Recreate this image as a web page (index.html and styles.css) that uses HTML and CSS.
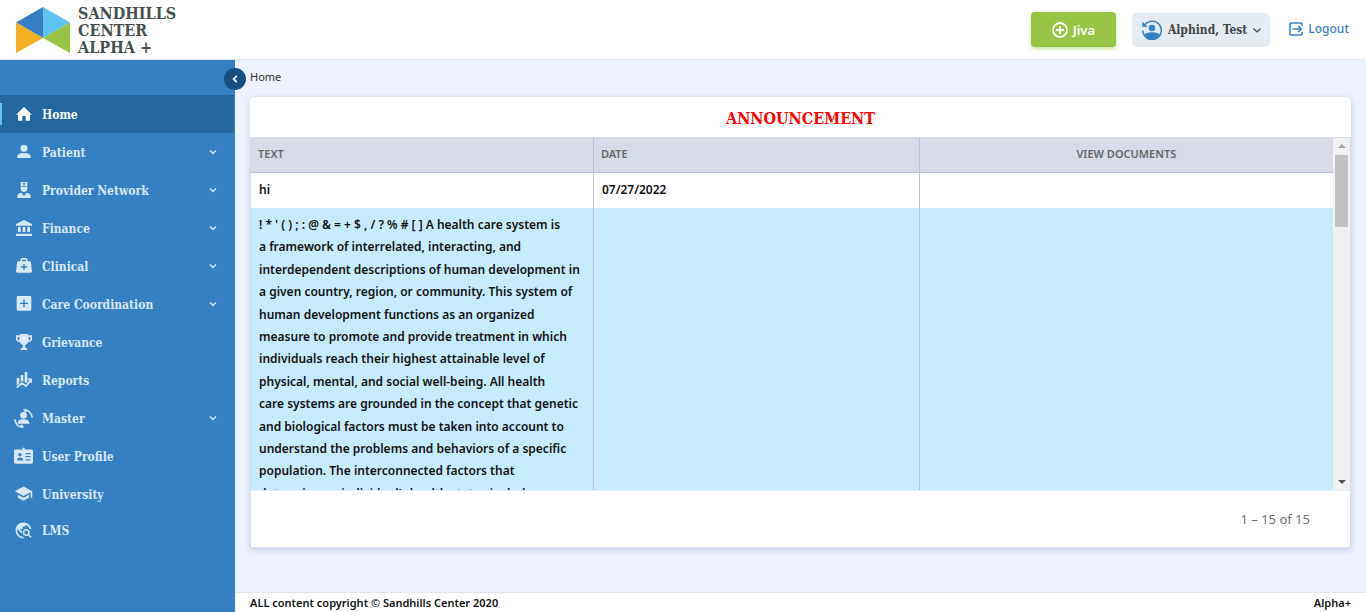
FILE: index.html
```html
<!DOCTYPE html>
<html lang="en">
<head>
<meta charset="utf-8">
<title>Sandhills Center Alpha+</title>
<link rel="stylesheet" href="styles.css">
</head>
<body>
<header class="topbar">
  <a class="brand" href="#">
    <svg class="brand-mark" viewBox="0 0 54 46" aria-hidden="true">
      <path fill="#3580c3" d="M0 15.500 27 0v31z"/><path fill="#60c3f1" d="M54 15.500 27 0v31z"/>
      <path fill="#f1af21" d="M0 15.500 27 31 0 46z"/><path fill="#98c446" d="M54 15.500 27 31 54 46z"/>
    </svg>
    <span class="brand-name">SANDHILLS<br>CENTER<br>ALPHA +</span>
  </a>
  <div class="actions">
    <button class="jiva" type="button">
      <svg class="icon-16" viewBox="0 0 16 16" fill="none" stroke="currentColor" stroke-width="1.800" aria-hidden="true"><circle cx="8" cy="8" r="7"/><path d="M8 4v8M4 8h8"/></svg>
      Jiva
    </button>
    <button class="account" type="button">
      <svg class="icon-20" viewBox="0 0 20 20" aria-hidden="true">
        <path fill="none" stroke="#3580c3" stroke-width="1.500" d="M3 4.500A9.200 9.200 0 1 1 .9 10.500"/>
        <path fill="#3580c3" d="M.3 1.500v5.300h5.300L3.800 5z"/>
        <circle cx="10" cy="8" r="3.200" fill="#3580c3"/>
        <path fill="#3580c3" d="M2 14.500c2-1.500 5-2.300 8-2.300s6 .8 8 2.300c-1.500 3.500-4.500 5.200-8 5.200s-6.500-1.700-8-5.200z"/>
      </svg>
      <span>Alphind, Test</span>
      <svg class="icon-8" viewBox="0 0 8 8" fill="none" stroke="currentColor" stroke-width="1.200" aria-hidden="true"><path d="m.5 2.500 3.500 3.500 3.500-3.500"/></svg>
    </button>
    <a class="logout" href="#">
      <svg class="icon-14" viewBox="0 0 14 14" fill="none" stroke="currentColor" stroke-width="1.500" aria-hidden="true"><path d="M13 4V2q0-1-1-1H2Q1 1 1 2v10q0 1 1 1h10q1 0 1-1v-2M3.500 7H12M9.300 4l3 3-3 3"/></svg>
      Logout
    </a>
  </div>
</header>

<div class="shell">
  <aside class="sidebar">
    <button class="collapse" type="button" aria-label="Collapse menu">
      <svg class="icon-8" viewBox="0 0 8 8" fill="none" stroke="currentColor" stroke-width="1.800" aria-hidden="true"><path d="M5.800.8 2.600 4l3.200 3.200"/></svg>
    </button>
    <nav class="menu">
      <a class="item active" href="#"><svg class="glyph" viewBox="0 0 24 24"><path d="M9.500 22v-7h5v7h6.500v-9h3L12 1.500 0 13h3v9z"/></svg><span>Home</span></a>
      <a class="item" href="#"><svg class="glyph" viewBox="0 0 24 24"><path d="M12 1a5.300 5.300 0 1 1 0 10.600A5.300 5.300 0 0 1 12 1zM12 13.500c6 0 10 2 10 5V21H2v-2.500c0-3 4-5 10-5z"/></svg><span>Patient</span><svg class="chev" viewBox="0 0 8 8"><path d="m1 2.500 3 3 3-3"/></svg></a>
      <a class="item" href="#"><svg class="glyph" viewBox="0 0 24 24"><path fill-rule="evenodd" d="M7 0h10v9c0 4-2 6-5 6s-5-2-5-6zM8.500 5.500V7h7V5.500zM11.300 1v1h-1v1.500h1v1h1.500v-1h1V2h-1V1zM8 16l4 5 4-5c4 1 6 2 6 4.500V24H2v-3.500c0-2.500 2-3.500 6-4.500z"/></svg><span>Provider Network</span><svg class="chev" viewBox="0 0 8 8"><path d="m1 2.500 3 3 3-3"/></svg></a>
      <a class="item" href="#"><svg class="glyph" viewBox="0 0 24 24"><path d="M12 0 0 6v2.500h24V6zM3 10.500h4V18H3zM10 10.500h4V18h-4zM17 10.500h4V18h-4zM0 20.500h24V24H0z"/></svg><span>Finance</span><svg class="chev" viewBox="0 0 8 8"><path d="m1 2.500 3 3 3-3"/></svg></a>
      <a class="item" href="#"><svg class="glyph" viewBox="0 0 24 24"><path fill-rule="evenodd" d="M10 0h4q3 0 3.500 3.500V5H20q2 0 2.500 2L24 20q0 2-2 2H2q-2 0-2-2L1.500 7Q2 5 4 5h2.500V3.500Q7 0 10 0zM9 5h6V3.500L14 2.500h-4L9 3.500zM11 9v3.500H7.500v2H11V18h2v-3.500h3.500v-2H13V9z"/></svg><span>Clinical</span><svg class="chev" viewBox="0 0 8 8"><path d="m1 2.500 3 3 3-3"/></svg></a>
      <a class="item" href="#"><svg class="glyph" viewBox="0 0 24 24"><path fill-rule="evenodd" d="M3 0h18q2 0 2 2v18q0 2-2 2H3q-2 0-2-2V2q0-2 2-2zM11 5v5H6v2h5v5h2v-5h5v-2h-5V5z"/></svg><span>Care Coordination</span><svg class="chev" viewBox="0 0 8 8"><path d="m1 2.500 3 3 3-3"/></svg></a>
      <a class="item" href="#"><svg class="glyph" viewBox="0 0 24 24"><path fill-rule="evenodd" d="M6 0h12v2h6v6c0 3-2 4-5.500 4-1 3-3 4-5 4.500V20c2 0 3.500 1.500 3.500 4H7c0-2.500 1.500-4 3.500-4v-3.500c-2-.5-4-1.500-5-4.500C2 12 0 11 0 8V2h6zM2.500 4.500v5H5v-5zM19 4.500v5h2.500v-5z"/></svg><span>Grievance</span></a>
      <a class="item" href="#"><svg class="glyph" viewBox="0 0 24 24"><path d="M1 9h4v8l-4 3.500zM7 4.500h4v10L9 13l-2 2zM13 0h4v16l-1 1-3-2.500z"/><path fill="none" stroke="currentColor" stroke-width="2.500" d="m1 23.500 8-7 6 4.500 8-9.500M18 11h5v5"/></svg><span>Reports</span></a>
      <a class="item" href="#"><svg class="glyph wide" viewBox="0 0 24 24"><circle cx="12" cy="8" r="4.200"/><path d="M4.500 18.500C5 14 8 13 12 13s7 1 7.500 5.500z"/><path fill="none" stroke="currentColor" stroke-width="2" d="M12 1c6 0 10 4 11 10M12.500 1.500 15.500 4M1 13c1 6 5 10 11 10M8.500 20l3 2.500"/></svg><span>Master</span><svg class="chev" viewBox="0 0 8 8"><path d="m1 2.500 3 3 3-3"/></svg></a>
      <a class="item" href="#"><svg class="glyph wide" viewBox="0 0 24 24"><path fill-rule="evenodd" d="M10.500 1h3v2H22q2 0 2 2v14q0 2-2 2H2q-2 0-2-2V5q0-2 2-2h8.500zM7.500 7.500a2.300 2.300 0 1 0 0 4.600 2.300 2.300 0 0 0 0-4.600zM4 17h7.500v-1.500c-1-2.500-6.500-2.500-7.500 0zM14.500 7.500v1.500H21V7.500zM14.500 11.500V13H21v-1.500zM14.500 15.500V17H21v-1.500z"/></svg><span>User Profile</span></a>
      <a class="item" href="#"><svg class="glyph wide" viewBox="0 0 24 24"><path d="M12 2 1 8l11 6 9-4.910V16h2V8M5 12.180v4L12 20l7-3.820v-4L12 16l-7-3.820z"/></svg><span>University</span></a>
      <a class="item last" href="#"><svg class="glyph wide" viewBox="0 0 24 24"><path d="M19.300 16.900c.4-.7.700-1.500.700-2.400 0-2.500-2-4.500-4.500-4.500S11 12 11 14.500s2 4.500 4.500 4.500c.9 0 1.700-.3 2.400-.7l3.200 3.200 1.400-1.400zM15.500 17c-1.400 0-2.500-1.100-2.500-2.500s1.100-2.500 2.500-2.500 2.500 1.100 2.500 2.500-1.100 2.500-2.500 2.500zM12 20v2C6.480 22 2 17.520 2 12S6.480 2 12 2c4.840 0 8.870 3.440 9.800 8h-2.070c-.64-2.460-2.400-4.470-4.730-5.410V5c0 1.100-.9 2-2 2h-2v2c0 .55-.45 1-1 1H8v2h2v3H9l-4.790-4.790C4.080 10.790 4 11.380 4 12c0 4.410 3.590 8 8 8z"/></svg><span>LMS</span></a>
    </nav>
  </aside>

  <div class="page">
    <main class="content">
      <div class="crumb">Home</div>
      <section class="card">
        <h1 class="title">ANNOUNCEMENT</h1>
        <div class="grid">
          <div class="scroller">
            <table class="list">
              <thead><tr><th class="col-text">TEXT</th><th class="col-date">DATE</th><th class="col-docs">VIEW DOCUMENTS</th></tr></thead>
              <tbody>
                <tr><td>hi</td><td>07/27/2022</td><td></td></tr>
                <tr class="alt"><td>! * ' ( ) ; : @ &amp; = + $ , / ? % # [ ] A health care system is<br>a framework of interrelated, interacting, and<br>interdependent descriptions of human development in<br>a given country, region, or community. This system of<br>human development functions as an organized<br>measure to promote and provide treatment in which<br>individuals reach their highest attainable level of<br>physical, mental, and social well-being. All health<br>care systems are grounded in the concept that genetic<br>and biological factors must be taken into account to<br>understand the problems and behaviors of a specific<br>population. The interconnected factors that<br>determine an individual’s health status include</td><td></td><td></td></tr>
              </tbody>
            </table>
          </div>
          <div class="track" aria-hidden="true"><span class="arrow up"></span><span class="thumb"></span><span class="arrow down"></span></div>
        </div>
        <div class="pager">1 – 15 of 15</div>
      </section>
    </main>
    <footer class="foot"><span>ALL content copyright © Sandhills Center 2020</span><span>Alpha+</span></footer>
  </div>
</div>
</body>
</html>
```
FILE: styles.css
```css
* { box-sizing: border-box; }
body {
  margin: 0;
  height: 100vh;
  display: flex;
  flex-direction: column;
  overflow: hidden;
  background: #eef2fc;
  color: #111;
  font-family: "Noto Sans", "Open Sans", sans-serif;
  font-size: 12px;
}
a { color: inherit; text-decoration: none; }
button { border: 0; font: inherit; cursor: pointer; }
svg { flex: none; }
.icon-8 { width: 8px; height: 8px; }
.icon-14 { width: 14px; height: 14px; }
.icon-16 { width: 16px; height: 16px; }
.icon-20 { width: 20px; height: 20px; }

.topbar {
  flex: none;
  height: 60px;
  display: flex;
  justify-content: space-between;
  padding: 0 17px 0 16px;
  background: #fff;
  border-bottom: 1px solid #e1e5ee;
}
.brand { display: flex; gap: 8px; padding-top: 5px; }
.brand-mark { width: 54px; height: 46px; margin-top: 2px; }
.brand-name {
  color: #46504f;
  font: bold 16px/17px "DejaVu Serif Condensed", "DejaVu Serif", serif;
}
.actions { display: flex; align-items: center; }
.jiva {
  display: flex;
  align-items: center;
  justify-content: center;
  gap: 5px;
  width: 85px;
  height: 35px;
  margin-right: 16px;
  border-radius: 4px;
  background: #98c446;
  color: #fff;
  font-size: 13px;
  font-weight: 600;
  box-shadow: 0 2px 4px #98c44688;
}
.account {
  display: flex;
  align-items: center;
  gap: 6px;
  height: 34px;
  margin-right: 19px;
  padding: 0 9px 0 10px;
  border-radius: 5px;
  background: #e4ebf1;
  color: #444;
  font: bold 12px/16px "DejaVu Serif Condensed", "DejaVu Serif", serif;
}
.logout {
  display: flex;
  align-items: center;
  gap: 5px;
  padding-bottom: 2px;
  color: #3580c3;
  font-size: 12px;
  font-weight: 500;
}

.shell { flex: 1; min-height: 0; display: flex; }
.sidebar {
  position: relative;
  flex: none;
  width: 235px;
  padding: 35px 1px 0 0;
  background: #3580c3;
}
.collapse {
  position: absolute;
  top: 8px;
  right: -11px;
  display: flex;
  align-items: center;
  justify-content: center;
  width: 22px;
  height: 22px;
  padding: 0;
  border-radius: 50%;
  background: #194f80;
  color: #fff;
}
.menu { display: flex; flex-direction: column; }
.item {
  position: relative;
  display: grid;
  grid-template-columns: 19px 1fr 8px;
  align-items: center;
  column-gap: 9px;
  height: 38px;
  padding: 0 17px 0 14px;
  color: #d9e8f5;
  font: bold 12px/16px "DejaVu Serif Condensed", "DejaVu Serif", serif;
}
.item span { padding-top: 2px; }
.item.last { height: 34px; }
.active { background: #2466a2; color: #fff; }
.active::before {
  content: "";
  position: absolute;
  top: 8px;
  bottom: 8px;
  left: 0;
  width: 2px;
  background: #60c3f1;
}
.glyph { width: 16px; height: 16px; justify-self: center; fill: currentColor; }
.glyph.wide { width: 19px; height: 19px; }
.chev { width: 8px; height: 8px; fill: none; stroke: currentColor; stroke-width: 1.5; }

.page { flex: 1; min-width: 0; display: flex; flex-direction: column; }
.content {
  flex: 1;
  min-height: 0;
  display: flex;
  flex-direction: column;
  padding: 8px 15px 44px;
}
.crumb { height: 29px; color: #333; font-size: 11px; line-height: 18px; }
.card {
  flex: 1;
  min-height: 0;
  display: flex;
  flex-direction: column;
  background: #fff;
  border-radius: 5px 5px 0 0;
  box-shadow: 0 2px 6px #c3cde4;
}
.title {
  margin: 0;
  padding-top: 4px;
  color: #f00;
  text-align: center;
  font: bold 16px/36px "DejaVu Serif Condensed", "DejaVu Serif", serif;
}
.grid {
  flex: 1;
  min-height: 0;
  display: flex;
  border: 1px solid #d7dae7;
  border-bottom-color: #e8ebf2;
}
.scroller { flex: 1; min-width: 0; overflow: hidden; }
.list { width: 100%; table-layout: fixed; border-collapse: separate; border-spacing: 0; }
th, td { text-align: left; border-left: 1px solid #bcc1d6; }
th:first-child, td:first-child { border-left: 0; }
th {
  height: 35px;
  padding: 0 7px 3px;
  background: #d7dae7;
  border-bottom: 1px solid #bcc1d6;
  color: #666;
  font-size: 11px;
  font-weight: 600;
}
.col-text { width: 31.6%; }
.col-date { width: 30.1%; }
.col-docs { text-align: center; }
td {
  height: 35px;
  padding: 6px 8px 5px;
  vertical-align: top;
  font-weight: 600;
  font-size: 12px;
  line-height: 1.867;
  white-space: nowrap;
}
.alt td { background: #c7ebfe; }
.track {
  flex: none;
  width: 17px;
  display: flex;
  flex-direction: column;
  align-items: center;
  background: #f1f1f1;
  padding: 6px 0;
}
.arrow { border: 4px solid transparent; }
.up { border-top: 0; border-bottom-color: #a3a3a3; }
.down { border-bottom: 0; border-top-color: #505050; margin-top: auto; }
.thumb { width: 13px; height: 72px; margin-top: 7px; background: #c1c1c1; }
.pager {
  flex: none;
  padding: 0 40px;
  border: 1px solid #d7dae7;
  border-top: 0;
  color: #707070;
  text-align: right;
  font-size: 13px;
  line-height: 56px;
}
.foot {
  flex: none;
  display: flex;
  justify-content: space-between;
  padding: 0 15px;
  background: #fff;
  border-top: 1px solid #e1e5ee;
  font-size: 11px;
  font-weight: 600;
  line-height: 19px;
}
```
